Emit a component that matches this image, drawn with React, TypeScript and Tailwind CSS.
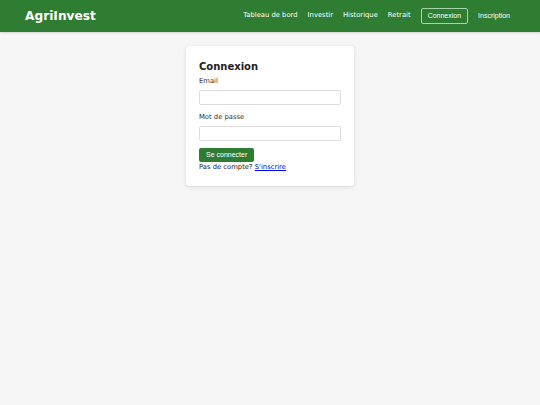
import { useState } from "react";

const navLinks = ["Tableau de bord", "Investir", "Historique", "Retrait"];

const Header = () => {
  return (
    <header className="h-8 bg-[#2e7d32] flex items-center justify-between pl-[25px] pr-[24px] shadow-[0_1px_2px_rgba(0,0,0,0.15)]">
      <h1 className="text-[12.2px] font-bold text-white leading-none pt-[1px]">AgriInvest</h1>
      <nav className="flex items-center text-[6.8px] text-white">
        {navLinks.map((l) => (
          <a key={l} href="#" className="mr-[10px] pb-[2px]">
            {l}
          </a>
        ))}
        <button className="h-[16px] px-[6px] border border-[#a5d6a7] rounded-[2px] text-[7px] font-['Liberation_Sans',sans-serif] text-white">
          Connexion
        </button>
        <button className="ml-[4px] h-[16px] px-[6px] text-[7px] font-['Liberation_Sans',sans-serif] text-white">
          Inscription
        </button>
      </nav>
    </header>
  );
};

const LoginCard = () => {
  const [email, setEmail] = useState("");
  const [password, setPassword] = useState("");

  return (
    <div className="w-[168px] bg-white rounded-[4px] shadow-[0_1px_4px_rgba(0,0,0,0.12)] px-[13px] pt-[16px] pb-[15px]">
      <h2 className="text-[10px] font-bold text-[#222] leading-none mb-[5px]">Connexion</h2>
      <label className="block text-[6.8px] leading-[8px] text-[#333] mb-[5px]">Email</label>
      <input
        type="email"
        value={email}
        onChange={(e) => setEmail(e.target.value)}
        className="block w-full h-[15px] border border-[#ddd] rounded-[2px] bg-white mb-[8px]"
      />
      <label className="block text-[6.8px] leading-[8px] text-[#333] mb-[5px]">Mot de passe</label>
      <input
        type="password"
        value={password}
        onChange={(e) => setPassword(e.target.value)}
        className="block w-full h-[15px] border border-[#ddd] rounded-[2px] bg-white mb-[7px]"
      />
      <button className="block h-[14px] px-[7px] bg-[#2e7d32] text-white text-[7px] rounded-[2px] font-['Liberation_Sans',sans-serif]">
        Se connecter
      </button>
      <p className="text-[6.8px] leading-[8px] text-[#222] mt-[1px]">
        Pas de compte?{" "}
        <a href="#" className="text-[#0000ee] underline">
          S'inscrire
        </a>
      </p>
    </div>
  );
};

export default function App() {
  return (
    <div className="min-h-[405px] bg-[#f6f6f6] font-['DejaVu_Sans',Verdana,sans-serif]">
      <Header />
      <main className="flex justify-center pt-[14px]">
        <LoginCard />
      </main>
    </div>
  );
}
